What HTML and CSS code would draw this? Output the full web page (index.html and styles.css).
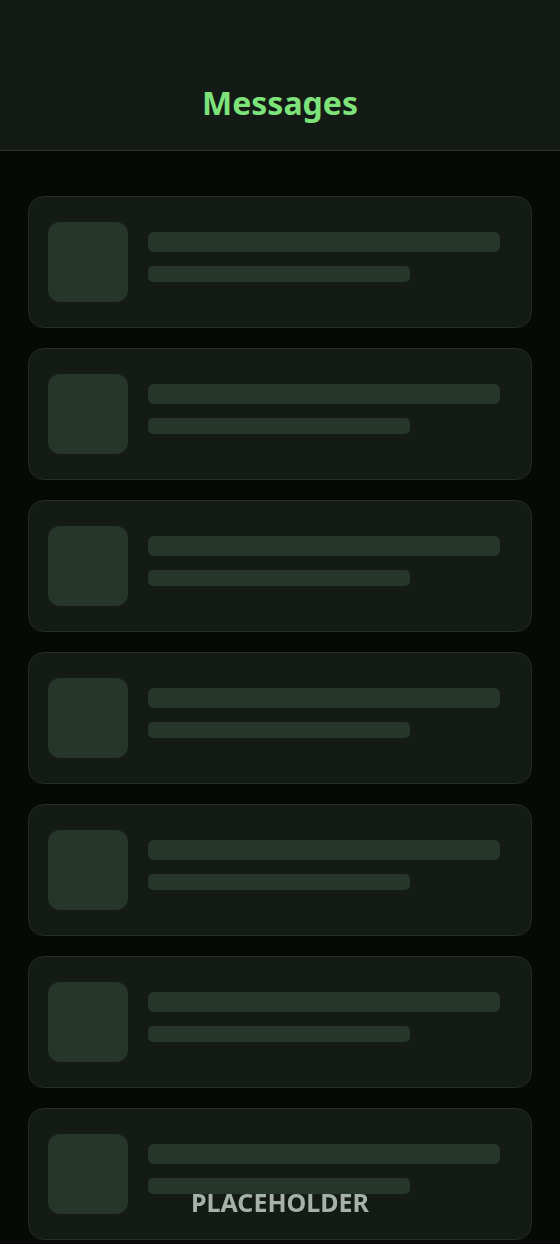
FILE: index.html
```html
<!DOCTYPE html>
<html>
<head>
    <title>Messages</title>
    <meta name="viewport" content="width=device-width, initial-scale=1">
    <link rel="stylesheet" href="styles.css">
</head>
<body>
    <div class="header">
        <h1>Messages</h1>
    </div>

    <div class="list">
        <div class="card">
            <div class="avatar"></div>
            <div class="lines">
                <div class="line long"></div>
                <div class="line short"></div>
            </div>
        </div>
        <div class="card">
            <div class="avatar"></div>
            <div class="lines">
                <div class="line long"></div>
                <div class="line short"></div>
            </div>
        </div>
        <div class="card">
            <div class="avatar"></div>
            <div class="lines">
                <div class="line long"></div>
                <div class="line short"></div>
            </div>
        </div>
        <div class="card">
            <div class="avatar"></div>
            <div class="lines">
                <div class="line long"></div>
                <div class="line short"></div>
            </div>
        </div>
        <div class="card">
            <div class="avatar"></div>
            <div class="lines">
                <div class="line long"></div>
                <div class="line short"></div>
            </div>
        </div>
        <div class="card">
            <div class="avatar"></div>
            <div class="lines">
                <div class="line long"></div>
                <div class="line short"></div>
            </div>
        </div>
        <div class="card">
            <div class="avatar"></div>
            <div class="lines">
                <div class="line long"></div>
                <div class="line short"></div>
            </div>
        </div>
    </div>

    <div class="placeholder">PLACEHOLDER</div>
</body>
</html>
```

FILE: styles.css
```css
body {
    margin: 0;
    font-family: "Noto Sans", "Open Sans", sans-serif;
    background-color: #060906;
    height: 1244px;
    overflow: hidden;
}

.header {
    height: 151px;
    box-sizing: border-box;
    background-color: #141a15;
    border-bottom: 1px solid #2c322d;
    padding-top: 84px;
    text-align: center;
}

h1 {
    margin: 0;
    color: #7ee27b;
    font-size: 32px;
    font-weight: bold;
    line-height: 38px;
}

.list {
    display: flex;
    flex-direction: column;
    gap: 20px;
    padding: 45px 28px 0 28px;
}

.card {
    display: flex;
    align-items: flex-start;
    gap: 20px;
    height: 132px;
    box-sizing: border-box;
    padding: 25px 19px;
    background-color: #141a16;
    border: 1px solid #252c26;
    border-radius: 16px;
}

.avatar {
    width: 80px;
    height: 80px;
    flex-shrink: 0;
    background-color: #26362a;
    border-radius: 12px;
}

.lines {
    display: flex;
    flex-direction: column;
    gap: 14px;
    padding-top: 10px;
}

.line {
    background-color: #26362a;
}

.line.long {
    width: 352px;
    height: 20px;
    border-radius: 6px;
}

.line.short {
    width: 262px;
    height: 16px;
    border-radius: 5px;
}

.placeholder {
    position: fixed;
    left: 0;
    right: 0;
    top: 1186px;
    text-align: center;
    color: #a6b2a7;
    font-size: 25px;
    font-weight: bold;
    line-height: 32px;
}
```
